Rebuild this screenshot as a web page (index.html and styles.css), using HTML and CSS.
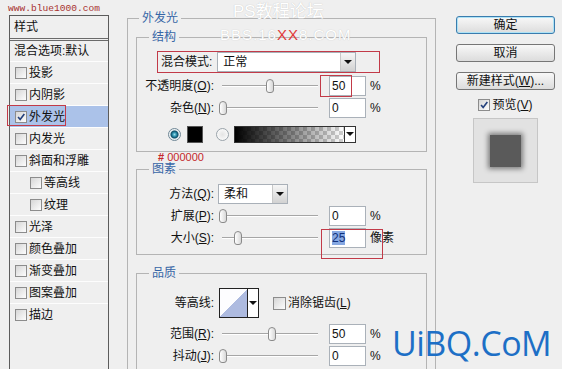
FILE: index.html
```html
<!DOCTYPE html>
<html>
<head>
    <meta charset="utf-8">
    <link rel="stylesheet" href="styles.css">
    <title>图层样式</title>
</head>
<body>
    <div class="dialog">
        <div class="side">
            <div class="site">www.blue1000.com</div>
            <ul class="styles">
                <li class="head">样式</li>
                <li class="blend">混合选项:默认</li>
                <li><span class="check"></span>投影</li>
                <li><span class="check"></span>内阴影</li>
                <li class="active"><span class="check on"><svg viewBox="0 0 12 12"><path d="M2.5 6 L5 9 L10 2.5" /></svg></span>外发光</li>
                <li><span class="check"></span>内发光</li>
                <li><span class="check"></span>斜面和浮雕</li>
                <li class="sub"><span class="check"></span>等高线</li>
                <li class="sub"><span class="check"></span>纹理</li>
                <li><span class="check"></span>光泽</li>
                <li><span class="check"></span>颜色叠加</li>
                <li><span class="check"></span>渐变叠加</li>
                <li><span class="check"></span>图案叠加</li>
                <li><span class="check"></span>描边</li>
            </ul>
        </div>

        <div class="main">
            <fieldset class="group outer">
                <legend>外发光</legend>

                <fieldset class="group structure">
                    <legend>结构</legend>
                    <div class="row blend-mode">
                        <span>混合模式:</span>
                        <div class="select wide"><span>正常</span><i class="drop"></i></div>
                    </div>
                    <div class="row first">
                        <span class="lbl">不透明度(<u>O</u>):</span>
                        <div class="slider"><span class="thumb" style="left: 44px"></span></div>
                        <div class="field marked-opacity">50</div>
                        <span class="unit">%</span>
                    </div>
                    <div class="row">
                        <span class="lbl">杂色(<u>N</u>):</span>
                        <div class="slider"><span class="thumb" style="left: -3px"></span></div>
                        <div class="field">0</div>
                        <span class="unit">%</span>
                    </div>
                    <div class="row color-row">
                        <span class="radio on"></span>
                        <span class="swatch"></span>
                        <span class="radio off"></span>
                        <div class="gradient"><span class="ramp"></span><i class="drop"></i></div>
                    </div>
                </fieldset>

                <div class="note"><b>#</b> 000000</div>

                <fieldset class="group elements">
                    <legend>图素</legend>
                    <div class="row">
                        <span class="lbl">方法(<u>Q</u>):</span>
                        <div class="select narrow"><span>柔和</span><i class="drop"></i></div>
                    </div>
                    <div class="row">
                        <span class="lbl">扩展(<u>P</u>):</span>
                        <div class="slider"><span class="thumb" style="left: -3px"></span></div>
                        <div class="field">0</div>
                        <span class="unit">%</span>
                    </div>
                    <div class="row">
                        <span class="lbl">大小(<u>S</u>):</span>
                        <div class="slider"><span class="thumb" style="left: 12px"></span></div>
                        <div class="field marked-size"><span class="sel">25</span></div>
                        <span class="unit">像素</span>
                    </div>
                </fieldset>

                <fieldset class="group quality">
                    <legend>品质</legend>
                    <div class="row contour-row">
                        <span class="lbl">等高线:</span>
                        <div class="contour"><span class="curve"></span><i class="drop"></i></div>
                        <span class="box"></span>
                        <span>消除锯齿(<u>L</u>)</span>
                    </div>
                    <div class="row">
                        <span class="lbl">范围(<u>R</u>):</span>
                        <div class="slider"><span class="thumb" style="left: 46px"></span></div>
                        <div class="field">50</div>
                        <span class="unit">%</span>
                    </div>
                    <div class="row">
                        <span class="lbl">抖动(<u>J</u>):</span>
                        <div class="slider"><span class="thumb" style="left: -3px"></span></div>
                        <div class="field">0</div>
                        <span class="unit">%</span>
                    </div>
                </fieldset>
            </fieldset>
        </div>

        <div class="actions">
            <button class="btn default">确定</button>
            <button class="btn">取消</button>
            <button class="btn">新建样式(<u>W</u>)...</button>
            <div class="preview-check">
                <span class="check on"><svg viewBox="0 0 12 12"><path d="M2.5 6 L5 9 L10 2.5" /></svg></span>预览(<u>V</u>)
            </div>
            <div class="preview"><span class="glow"></span></div>
        </div>
    </div>

    <!-- watermarks laid over the dialog -->
    <div class="wm-ps">PS教程论坛</div>
    <div class="wm-bbs">BBS.16<span>XX</span>8.COM</div>
    <div class="wm-uibq">UiBQ.CoM</div>
</body>
</html>
```

FILE: styles.css
```css
html, body {
    margin: 0;
    height: 100%;
}
body {
    position: relative;
    overflow: hidden;
    background: #efefef;
    color: #111;
    font: 12px/14px "Liberation Sans", "Noto Sans CJK SC", sans-serif;
}
u {
    text-decoration: underline;
}

.dialog {
    display: flex;
    padding-left: 9px;
    height: 369px;
}

/* left style list */
.side {
    width: 100px;
    flex: none;
    padding-top: 2px;
}
.site {
    height: 13px;
    font: 9.6px/13px "Liberation Mono", monospace;
    color: #a8322f;
    margin-left: -1px;
}
.styles {
    list-style: none;
    margin: 0;
    padding: 0;
    height: 360px;
    border: 1px solid #5c5c5c;
    background: #efefef;
}
.styles li {
    position: relative;
    display: flex;
    align-items: center;
    height: 21px;
    padding-left: 5px;
    border-top: 1px solid #fdfdfd;
}
.styles li.head {
    height: 22px;
    padding-left: 4px;
    border-top: 0;
    border-bottom: 3px double #6a6a6a;
}
.styles li.blend {
    height: 20px;
    padding-left: 4px;
    border-top: 0;
}
.styles li.sub {
    padding-left: 20px;
}
.styles li.active {
    background: #abc2e9;
}
.styles li.active::after {
    content: "";
    position: absolute;
    left: -3px;
    top: -1px;
    width: 57px;
    height: 19px;
    border: 1px solid #c23a48;
}

.check, .box {
    display: inline-block;
    box-sizing: border-box;
    width: 12px;
    height: 12px;
    margin-right: 2px;
    border: 1px solid #8c8c8c;
    background: linear-gradient(135deg, #d6d6d6, #fdfdfd);
    flex: none;
}
.check svg {
    display: block;
    width: 10px;
    height: 10px;
}
.check svg path {
    fill: none;
    stroke: #23407c;
    stroke-width: 2;
}

/* main panel */
.main {
    width: 309px;
    flex: none;
    margin-left: 18px;
    margin-top: 11px;
}
fieldset.group {
    margin: 0;
    padding: 7px 0 7px;
    min-width: 0;
    border: 1px solid #b4b4b4;
}
fieldset.outer {
    padding: 5px 8px 0;
    height: 400px;
}
legend {
    padding: 0 3px;
    margin-left: 12px;
    line-height: 14px;
    color: #3766a6;
}
.outer > legend {
    margin-left: 3px;
}
.elements {
    padding-bottom: 5px !important;
}
.quality {
    margin-top: 11px !important;
    padding-top: 8px !important;
}

.row {
    display: flex;
    align-items: center;
    height: 22px;
}
.row.first {
    margin-top: 2px;
}
.lbl {
    width: 77px;
    flex: none;
    text-align: right;
}
.blend-mode {
    box-sizing: border-box;
    width: 223px;
    margin-left: 20px;
    padding-left: 3px;
    border: 1px solid #c23a48;
}

.select {
    display: flex;
    box-sizing: border-box;
    height: 20px;
    margin-left: 4px;
    border: 1px solid #a9b0b8;
    background: #fff;
    flex: none;
}
.blend-mode .select {
    margin-left: 5px;
}
.select.wide {
    width: 139px;
}
.select.narrow {
    width: 70px;
}
.select span {
    flex: 1;
    padding-left: 5px;
    line-height: 18px;
}
.drop {
    display: flex;
    align-items: center;
    justify-content: center;
    width: 14px;
    border-left: 1px solid #c8c8c8;
    background: linear-gradient(#f6f6f6, #d2d2d2);
}
.drop::before {
    content: "";
    border-left: 4px solid transparent;
    border-right: 4px solid transparent;
    border-top: 4px solid #111;
}

.slider {
    position: relative;
    width: 96px;
    height: 14px;
    margin-left: 8px;
    flex: none;
}
.slider::before {
    content: "";
    position: absolute;
    left: 0;
    right: 0;
    top: 6px;
    height: 1px;
    background: #a6a6a6;
    border-bottom: 1px solid #fff;
}
.thumb {
    position: absolute;
    top: 0;
    width: 6px;
    height: 12px;
    border: 1px solid #8a8a8a;
    border-radius: 4px 4px 3px 3px;
    background: linear-gradient(90deg, #fff, #d8d8d8);
}
.field {
    position: relative;
    box-sizing: border-box;
    width: 37px;
    height: 20px;
    margin-left: 11px;
    padding-left: 2px;
    border: 1px solid #aab1b9;
    background: #fff;
    line-height: 18px;
    flex: none;
}
.field .sel {
    background: #86a8e2;
    color: #10307a;
}
.marked-opacity::after {
    content: "";
    position: absolute;
    left: -10px;
    top: -2px;
    width: 30px;
    height: 20px;
    border: 1px solid #c23a48;
}
.marked-size::after {
    content: "";
    position: absolute;
    left: -9px;
    top: 0;
    width: 60px;
    height: 28px;
    border: 1px solid #c23a48;
}
.unit {
    margin-left: 4px;
}

.color-row {
    height: 20px;
    margin-top: 5px;
    padding-left: 31px;
}
.radio {
    width: 11px;
    height: 11px;
    border-radius: 50%;
    border: 1px solid #9aa3aa;
    background: radial-gradient(circle, #e4e4e4 0, #fafafa 6px);
    flex: none;
}
.radio.on {
    border-color: #6f8796;
    background: radial-gradient(circle, #9be0ec 0, #2b8eab 2px, #0d4c66 3.5px, #dfe8ec 4.5px, #fff 6px);
}
.radio.off {
    margin-left: 13px;
}
.swatch {
    box-sizing: border-box;
    width: 16px;
    height: 17px;
    margin-left: 6px;
    border: 1px solid #555;
    background: #000;
    flex: none;
}
.gradient {
    display: flex;
    box-sizing: border-box;
    width: 122px;
    height: 17px;
    margin-left: 5px;
    border: 1px solid #333;
    flex: none;
}
.gradient .ramp {
    flex: 1;
    background: linear-gradient(to right, #000, rgba(0, 0, 0, 0)),
        repeating-conic-gradient(#cfcfcf 0 25%, #fff 0 50%) 0 0 / 8px 8px;
}
.gradient .drop {
    width: 10px;
    background: #fff;
    border-left: 1px solid #333;
}

.note {
    height: 10px;
    margin-left: 22px;
    font-size: 11px;
    line-height: 10px;
    color: #c5282a;
}

.contour-row {
    height: 30px;
    margin-bottom: 5px;
}
.contour {
    display: flex;
    box-sizing: border-box;
    width: 40px;
    height: 30px;
    margin-left: 5px;
    border: 1px solid #222;
}
.contour .curve {
    flex: 1;
    background: linear-gradient(to top left, #aebbe0 50%, #fdfdff 50%);
}
.contour .drop {
    width: 10px;
    background: #fff;
    border-left: 1px solid #222;
}
.contour-row .box {
    width: 13px;
    height: 13px;
    margin-left: 14px;
}

/* right column */
.actions {
    display: flex;
    flex-direction: column;
    align-items: center;
    width: 99px;
    margin-left: 20px;
    padding-top: 16px;
    flex: none;
}
.btn {
    box-sizing: border-box;
    width: 99px;
    height: 18px;
    margin: 0 0 10px;
    padding: 0;
    border: 1px solid #767676;
    border-radius: 3px;
    background: linear-gradient(#f8f8f8, #dcdcdc);
    font: inherit;
    line-height: 16px;
    color: #111;
}
.btn.default {
    border-color: #3a7cae;
    box-shadow: inset 0 0 0 1px #aee3f6;
}
.preview-check {
    display: flex;
    align-items: center;
    height: 14px;
    margin-top: -2px;
}
.preview {
    display: flex;
    align-items: center;
    justify-content: center;
    box-sizing: border-box;
    width: 65px;
    height: 65px;
    margin-top: 6px;
    border: 1px solid #c6c6c6;
    background: #e2e2e2;
}
.glow {
    width: 31px;
    height: 32px;
    background: #5a5a5a;
    box-shadow: 0 0 5px 2px rgba(0, 0, 0, 0.45);
}

/* watermarks */
.wm-ps, .wm-bbs {
    position: absolute;
    color: #fff;
    text-shadow: 0 0 1px #b8b8b8;
    font-family: "Liberation Sans", "Noto Sans CJK SC", sans-serif;
}
.wm-ps {
    left: 233px;
    top: 2px;
    font-size: 17px;
    line-height: 20px;
}
.wm-bbs {
    left: 220px;
    top: 26px;
    font-size: 15px;
    line-height: 18px;
    letter-spacing: 1px;
}
.wm-bbs span {
    color: #e03a3a;
    text-shadow: none;
}
.wm-uibq {
    position: absolute;
    left: 392px;
    top: 323px;
    font: 34px/40px "Open Sans", sans-serif;
    letter-spacing: -0.5px;
    color: #1d6fc6;
}
```
